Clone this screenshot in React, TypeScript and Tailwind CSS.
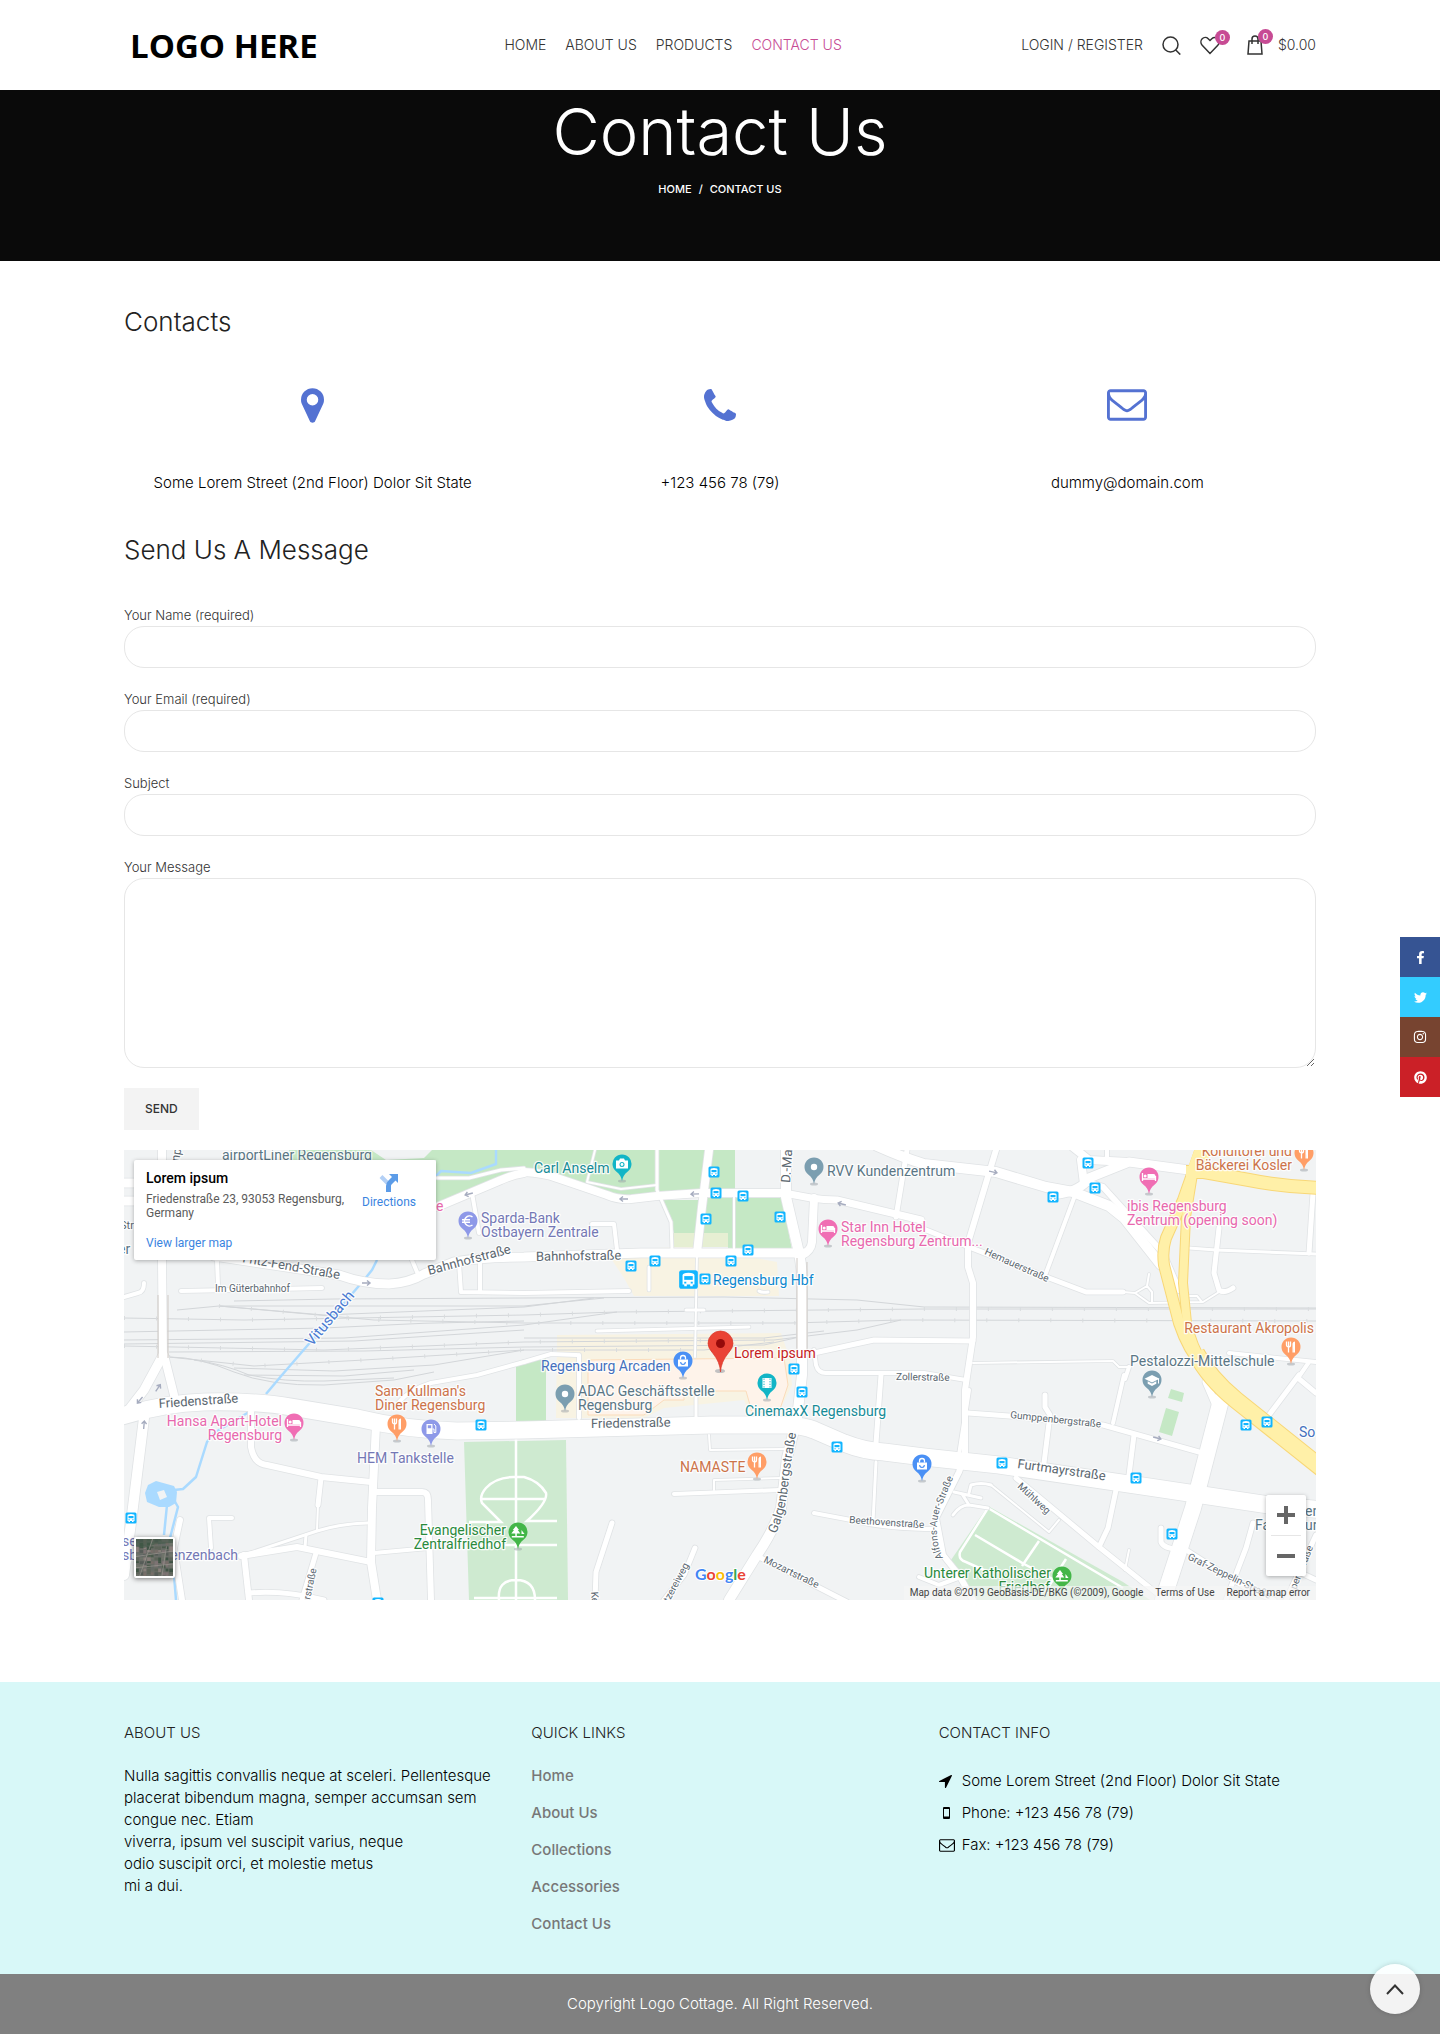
import React from 'react';
import { FaFacebookF, FaTwitter, FaInstagram, FaPinterest } from 'react-icons/fa';

const PHONE =
  'M1408 1240q0 27-10 70.5t-21 68.5q-21 50-122 106-94 51-186 51-27 0-53-3.5t-57.5-12.5-47-14.5-55.5-20.5-49-18q-98-35-175-83-127-79-264-216t-216-264q-48-77-83-175-3-9-18-49t-20.5-55.5-14.5-47-12.5-57.5-3.5-53q0-92 51-186 56-101 106-122 25-11 68.5-21t70.5-10q14 0 21 3 18 6 53 76 11 19 30 54t35 63.5 31 53.5q3 4 17.5 25t21.5 35.5 7 28.5q0 20-28.5 50t-62 55-62 53-28.5 46q0 9 5 22.5t8.5 20.5 14 24 11.5 19q76 137 174 235t235 174q2 1 19 11.5t24 14 20.5 8.5 22.5 5q18 0 46-28.5t53-62 55-62 50-28.5q14 0 28.5 7t35.5 21.5 25 17.5q25 15 53.5 31t63.5 35 54 30q70 35 76 53 3 7 3 21z';
const MARKER =
  'M768 896q0-106-75-181t-181-75-181 75-75 181 75 181 181 75 181-75 75-181zm256 0q0 109-33 179l-364 774q-16 33-47.5 52t-67.5 19-67.5-19-46.5-52l-365-774q-33-70-33-179 0-212 150-362t362-150 362 150 150 362z';
const ENVELOPE =
  'M1664 1504v-768q-32 36-69 66-268 206-426 338-51 43-83 67t-86.5 48.5-102.5 24.5h-2q-48 0-102.5-24.5t-86.5-48.5-83-67q-158-132-426-338-37-30-69-66v768q0 13 9.5 22.5t22.5 9.5h1472q13 0 22.5-9.5t9.5-22.5zm0-1051v-24.5l-.5-13-3-12.5-5.5-9-9-7.5-14-2.5h-1472q-13 0-22.5 9.5t-9.5 22.5q0 168 147 284 193 152 401 317 6 5 35 29.5t46 37.5 44.5 31.5 50.5 27.5 43 9h2q20 0 43-9t50.5-27.5 44.5-31.5 46-37.5 35-29.5q208-165 401-317 54-43 100.5-115.5t46.5-131.5zm128-37v1088q0 66-47 113t-113 47h-1472q-66 0-113-47t-47-113v-1088q0-66 47-113t113-47h1472q66 0 113 47t47 113z';
const ARROW =
  'M1401 217l-640 1280q-17 35-57 35-5 0-15-2-22-5-35.5-22.5t-13.5-39.5v-576h-576q-22 0-39.5-13.5t-22.5-35.5 4-42 29-30l1280-640q13-7 29-7 27 0 45 19 15 14 18.5 34.5t-6.5 39.5z';

/* ---------- map data ---------- */

const roads: [number, string][] = [
  [9, 'M0 33H120M0 51H120'],
  [8, 'M313 57L377 30Q388 25 400 23'],
  [3, 'M313 28H345L377 20L400 18'],
  [8, 'M400 22Q420 23 433 28L483 45Q495 50 507 49L533 46L577 43H660'],
  [9, 'M90 106L215 125Q240 134 265 134Q285 133 300 124L330 112Q360 107 400 107L517 103H680'],
  [8, 'M38 0V110L39 210'],
  [9, 'M39 205L20 240L0 266'],
  [8, 'M40 205L50 245'],
  [10, 'M20 268L8 365L0 425'],
  [8, 'M252 275L248 358L247 412L253 450'],
  [6, 'M127 262V297Q130 314 143 315L197 327L247 332'],
  [6, 'M253 342H298Q304 342 304 350L307 450'],
  [5, 'M197 328L194 355'],
  [2, 'M194 355L193 380'],
  [3, 'M120 405L193 381Q215 374 243 373'],
  [6, 'M117 406L173 397L247 412'],
  [6, 'M120 405L125 450'],
  [5, 'M125 443Q160 440 200 450'],
  [5, 'M192 403L178 450'],
  [3, 'M182 385L181 397'],
  [4, 'M250 403L305 398'],
  [4, 'M108 368H85L87 398'],
  [6, 'M56 370L50 398L58 450'],
  [8, 'M585 0L578 57L573 103'],
  [2, 'M573 103L571 207'],
  [3, 'M533 0V40L547 72L548 100'],
  [2, 'M471 0L463 32L497 39L533 35M610 43V100'],
  [4, 'M468 74H490L493 100'],
  [10, 'M662 0V47L675 103Q678 118 678 133V225L673 268L663 308L657 358Q650 380 633 405L605 450'],
  [7, 'M660 43L687 48Q700 50 713 50L797 70'],
  [8, 'M690 48L688 92Q687 101 678 105'],
  [5, 'M783 0L772 67'],
  [10, 'M753 -4Q780 8 800 14L872 22L922 37L949 42L985 56L1000 68L1037 115'],
  [9, 'M935 44Q958 40 965 28L1005 12L1065 20'],
  [8, 'M945 -6L965 10L1005 12M957 10L960 34'],
  [6, 'M962 32L979 37L1039 103L1055 140'],
  [6, 'M872 0L865 23L844 93V117L849 133V187L841 240V305'],
  [4, 'M845 240L835 305'],
  [4, 'M950 48L922 123'],
  [4, 'M983 0V10'],
  [5, 'M797 78L845 97L925 128L962 142H999'],
  [2, 'M999 142L1011 143L1025 153L1079 152L1095 142M1011 143L1023 136L1025 124M1023 136L1028 142V153M1060 146H1073L1078 152'],
  [5, 'M1095 78L1090 123L1095 140Q1100 144 1109 138'],
  [3, 'M1065 98L1092 100L1192 104'],
  [5, 'M1189 43L1185 103'],
  [5, 'M690 203L750 190L849 191'],
  [4, 'M690 200L692 215Q694 223 702 223H800L842 230'],
  [2, 'M849 213L989 211L995 217H1005'],
  [4, 'M1000 225L989 273M1005 217L1001 229'],
  [5, 'M844 263L885 266L979 275L1075 302'],
  [5, 'M921 245V257L926 265L920 313'],
  [5, 'M1010 285L1005 325M992 340L984 378L975 397'],
  [6, 'M841 305L835 322L812 368L819 405L835 425L849 450'],
  [5, 'M892 328L975 397L1035 445'],
  [3, 'M829 365Q836 355 845 355L864 358M830 342L857 348M845 355L838 344M845 343L847 335Q857 332 867 335'],
  [2, 'M867 335L925 382L935 370M1005 400L1001 420'],
  [5, 'M1037 378V392Q1040 399 1055 399M1059 398L1125 440L1150 450'],
  [5, 'M1129 373L1122 398L1102 450M1192 385L1162 450M1160 415L1192 430'],
  [5, 'M1175 225L1145 265M1174 228L1192 243'],
  [4, 'M1105 203L1192 212M1185 212L1174 228'],
  [16, 'M1097 250L1082 308L1069 358L1039 450'],
  [7, 'M1082 232L1094 260'],
  [17, 'M-5 267Q40 253 80 252Q133 251 167 257L233 268Q283 280 333 281L400 280L587 275H663Q680 276 690 280L720 293Q740 301 760 302L800 307L875 315L1025 337L1145 355L1200 360'],
  [5, 'M488 373L472 422L471 450'],
  [5, 'M571 398L560 425L540 450'],
  [4, 'M550 344L655 340'],
  [2, 'M585 285L586 300L660 299M590 340V330L657 328'],
  [4, 'M690 363L727 370Q760 379 812 379'],
  [5, 'M757 225L752 293'],
  [3, 'M752 312L749 372'],
  [5, 'M635 407L723 452'],
  [4, 'M455 205V268M400 212L427 204L453 205'],
  [3, 'M572 245V268'],
  [4, 'M275 252Q285 240 307 233L353 225L400 212'],
  [4, 'M337 142L400 143L505 141M335 113L337 142M356 113V142'],
  [4, 'M57 141L198 138M93 110L94 135M288 110L293 122M348 43L355 83M20 133Q20 142 14 143L0 147'],
  [3, 'M525 117V140M562 160H580M473 181L625 177M635 141Q638 143 644 142'],
  [4, 'M795 427L815 435L842 425'],
];

const rails = [
  'M0 168L120 170L400 165L493 162L800 159H1192',
  'M0 182L200 178Q300 172 400 171',
  'M53 160L95 156L250 170L400 173L667 173L777 170L1192 171',
  'M110 151L210 149L400 148L600 147L733 150L800 157L1192 158',
  'M95 156H400L480 148',
  'M95 156L200 165L400 157L470 148',
  'M0 190L220 188L400 175L493 162',
  'M0 194L230 191L400 180',
  'M0 196L200 200L400 192L650 190L733 180L777 170',
  'M45 202L240 201L400 197L640 195L680 186',
  'M45 207L130 216L240 210L400 200L580 200L650 192',
  'M45 207Q75 207 110 222Q145 236 200 235L270 230L310 222',
  'M70 210Q100 214 125 225Q160 232 200 231L270 228',
  'M110 218L210 221L310 215L400 200',
  'M120 225L220 226L290 220',
  'M400 188H640L700 181',
];

const ink = {
  street: '#5b6770',
  gray: '#5a7685',
  purple: '#7478b5',
  teal: '#168b97',
  pink: '#e868ad',
  orange: '#cc734a',
  green: '#2a8a3c',
  blue: '#4570bd',
};

type Label = [string, number, number, string, number?, number?, ('end' | 'start')?];
const labels: Label[] = [
  ['airportLiner Regensburg', 98, 10, ink.gray],
  ['Sparda-Bank', 357, 73, ink.purple],
  ['Ostbayern Zentrale', 357, 87, ink.purple],
  ['e', 312, 61, ink.pink],
  ['er', -6, 104, ink.gray],
  ['Str', -4, 79, ink.street, 11],
  ['np', 55, 12, ink.street, 12, -80],
  ['Bahnhofstraße', 305, 125, ink.street, 13, -15],
  ['Bahnhofstraße', 412, 111, ink.street, 13, -1],
  ['Fritz-Fend-Straße', 118, 112, ink.street, 13, 10],
  ['Im Güterbahnhof', 91, 142, ink.street, 10],
  ['Vitusbach', 188, 197, '#4b7bd1', 15, -50],
  ['Carl Anselm', 410, 23, ink.teal],
  ['RVV Kundenzentrum', 703, 26, ink.gray],
  ['D.-Ma', 666, 33, ink.street, 13, -86],
  ['Star Inn Hotel', 717, 82, ink.pink],
  ['Regensburg Zentrum...', 717, 96, ink.pink],
  ['Regensburg Hbf', 589, 135, '#0d88cf'],
  ['Lorem ipsum', 610, 208, '#c5221f'],
  ['Regensburg Arcaden', 417, 221, ink.blue],
  ['Konditorei und', 1168, 6, ink.orange, 14, 0, 'end'],
  ['Bäckerei Kosler', 1168, 20, ink.orange, 14, 0, 'end'],
  ['ibis Regensburg', 1003, 61, ink.pink],
  ['Zentrum (opening soon)', 1003, 75, ink.pink],
  ['Hemauerstraße', 860, 104, ink.street, 10, 24],
  ['Restaurant Akropolis', 1190, 183, ink.orange, 14, 0, 'end'],
  ['Pestalozzi-Mittelschule', 1006, 216, ink.gray],
  ['Friedenstraße', 35, 258, ink.street, 13, -4],
  ['Hansa Apart-Hotel', 158, 276, ink.pink, 14, 0, 'end'],
  ['Regensburg', 158, 290, ink.pink, 14, 0, 'end'],
  ["Sam Kullman's", 251, 246, ink.orange],
  ['Diner Regensburg', 251, 260, ink.orange],
  ['HEM Tankstelle', 233, 313, ink.purple],
  ['Evangelischer', 382, 385, ink.green, 14, 0, 'end'],
  ['Zentralfriedhof', 382, 399, ink.green, 14, 0, 'end'],
  ['se', -2, 396, ink.purple],
  ['sb', -2, 410, ink.purple],
  ['enzenbach', 114, 410, ink.purple, 14, 0, 'end'],
  ['rstraße', 186, 450, ink.street, 10, -78],
  ['ADAC Geschäftsstelle', 454, 246, ink.gray],
  ['Regensburg', 454, 260, ink.gray],
  ['Friedenstraße', 467, 278, ink.street, 13, -1],
  ['CinemaxX Regensburg', 621, 266, ink.teal],
  ['NAMASTE', 556, 322, ink.orange],
  ['Zollerstraße', 772, 230, ink.street, 10, 1],
  ['Beethovenstraße', 725, 373, ink.street, 10, 4],
  ['Mozartstraße', 639, 412, ink.street, 10, 26],
  ['tzereiweg', 545, 453, ink.street, 10, -62],
  ['Ke', 467, 442, ink.street, 10, 85],
  ['Gumppenbergstraße', 886, 268, ink.street, 10, 6],
  ['Furtmayrstraße', 893, 318, ink.street, 13, 8],
  ['Mühlweg', 893, 337, ink.street, 10, 43],
  ['Unterer Katholischer', 800, 428, ink.green],
  ['Friedhof', 926, 442, ink.green, 14, 0, 'end'],
  ['So', 1175, 287, ink.blue],
  ['en', 1181, 366, ink.gray],
  ['Fa', 1131, 380, ink.gray],
  ['ur', 1181, 380, ink.gray],
  ['Graf-Zeppelin-Straße', 1063, 409, ink.street, 10, 26],
  ['per-Straße', 1172, 440, ink.street, 10, -68],
];

const glyphs: Record<string, React.ReactNode> = {
  dot: <circle r="3.2" fill="#fff" />,
  camera: (
    <>
      <path d="M-6 -3.500h3l1-2h4l1 2h3v8h-12z" fill="#fff" />
      <circle cy=".5" r="2.500" fill="#12b5c6" />
      <circle cy=".5" r="1.400" fill="#fff" />
    </>
  ),
  bed: (
    <>
      <path d="M-6.500 -4v8M-6.500 2h13M6.500 4v-5" stroke="#fff" strokeWidth="1.300" fill="none" />
      <path d="M-1.500 -3h6a2 2 0 0 1 2 2v2h-8z" fill="#fff" />
      <circle cx="-3.800" cy="-1" r="1.500" fill="#fff" />
    </>
  ),
  food: (
    <>
      <path d="M-4.500 -5.500v3.500a2 2 0 0 0 4 0v-3.500M-2.500 -5.500v11" stroke="#fff" strokeWidth="1.300" fill="none" />
      <path d="M1.500 5.500v-9q.5-2 2.500-2v11h-1.200v-4h-.1v4z" fill="#fff" />
    </>
  ),
  bag: (
    <>
      <path d="M-5 -1.500h10v7h-10z" fill="#fff" />
      <path d="M-2.500 -1.500v-1.500a2.500 2.500 0 0 1 5 0v1.500" stroke="#fff" strokeWidth="1.300" fill="none" />
      <path d="M-2.300 1a2.300 2.300 0 0 0 4.600 0" stroke="#4a90f5" strokeWidth="1.200" fill="none" />
    </>
  ),
  fuel: (
    <>
      <path d="M-4.500 5v-10h6v10zM-3.200 -3.700v3h3.400v-3z" fill="#fff" fillRule="evenodd" />
      <path d="M1.500 0h1.500v3.500h1.800v-6.500l-1.800-2" stroke="#fff" strokeWidth="1" fill="none" />
    </>
  ),
  film: (
    <>
      <path d="M-4.500 -5h9v10h-9z" fill="#fff" />
      <path d="M-3 -4.500v9M3 -4.500v9" stroke="#12b5c6" strokeDasharray="1.300 1.300" fill="none" />
    </>
  ),
  cap: (
    <>
      <path d="M0 -5l7.500 3.700-7.500 3.700-7.500-3.700z" fill="#fff" />
      <path d="M-4.300 1.300l4.300 2.200 4.300-2.200v2.500l-4.300 2.200-4.300-2.200zM6 -1v4.500h1v-5z" fill="#fff" />
    </>
  ),
  tree: <path d="M-2 -6l3 4h-1.200l2.500 3.500h-3.500v2.500h7v1.500h-12v-1.500h3.500v-2.500h-4l2.700-3.500h-1.200zM3.500 -2l3 4h-3z" fill="#fff" />,
  euro: <path d="M4.500 -4a5 5 0 1 0 0 8M-6 -1.300h8M-6 1.300h8" stroke="#fff" strokeWidth="1.500" fill="none" />,
};

const pins: [number, number, string, string][] = [
  [498, 14, '#12b5c6', 'camera'],
  [690, 17, '#7b9eb0', 'dot'],
  [704, 79, '#f06eb4', 'bed'],
  [344, 71, '#8e99e8', 'euro'],
  [559, 211, '#4a90f5', 'bag'],
  [1025, 27, '#f06eb4', 'bed'],
  [1180, 3, '#ff9e67', 'food'],
  [1167, 197, '#ff9e67', 'food'],
  [1028, 230, '#7b9eb0', 'cap'],
  [170, 273, '#f06eb4', 'bed'],
  [273, 274, '#ff9e67', 'food'],
  [307, 279, '#8e99e8', 'fuel'],
  [394, 382, '#43b648', 'tree'],
  [441, 244, '#7b9eb0', 'dot'],
  [643, 233, '#12b5c6', 'film'],
  [633, 312, '#ff9e67', 'food'],
  [798, 314, '#4a90f5', 'bag'],
  [938, 426, '#43b648', 'tree'],
];

const stops: [number, number][] = [
  [590, 22], [592, 43], [619, 46], [582, 69], [656, 67], [624, 100], [607, 111], [531, 111],
  [507, 116], [581, 129], [670, 219], [964, 13], [971, 38], [929, 47], [357, 275], [7, 368],
  [254, 453], [678, 242], [713, 297], [878, 313], [1012, 328], [1048, 384], [1122, 275], [1143, 272],
];

const arrows: [number, number, number][] = [
  [345, 44, 165], [242, 133, 0], [500, 49, 180], [571, 44, 178], [718, 54, 195], [869, 22, 12],
  [34, 238, -55], [16, 250, 130], [20, 275, -85], [1033, 288, 15],
];

function Bus() {
  return (
    <>
      <rect x="-5.500" y="-5.500" width="11" height="11" rx="1.500" fill="#12b5ff" />
      <path d="M-3.500 3v-5.500q0-1.500 3.500-1.500t3.500 1.500v5.500h-1v1h-1.500v-1h-2v1h-1.500v-1z" fill="#fff" />
      <path d="M-2.500 -2h5v2.200h-5z" fill="#12b5ff" />
      <path d="M-2.500 1.300h1.200v1h-1.200zM1.300 1.300h1.200v1h-1.200z" fill="#12b5ff" />
    </>
  );
}

function MapDrawing() {
  return (
    <svg
      viewBox="0 0 1192 450"
      preserveAspectRatio="xMidYMid slice"
      className="block h-full w-full"
      role="img"
      aria-label="Street map of Regensburg"
      fontFamily="Roboto, sans-serif"
    >
      <rect width="1192" height="450" fill="#f1f3f4" />
      <g fill="#c5e8c5">
        <path d="M165 0H247L262 10L300 8L308 0H582L577 42L507 48L483 44L433 27L400 20L377 27L312 57V10H165z" />
        <path d="M587 0H611V42H582z" />
        <path d="M537 50H577L573 83H550L547 72z" />
        <path d="M583 48H658L668 100H604V85H578z" />
        <path d="M392 215L400 212L422 204V272H392z" />
        <path d="M1047 239L1060 243L1058 252L1044 248zM1042 258L1055 262L1048 286L1035 282z" />
      </g>
      <g fill="#ceead0">
        <path d="M340 292L442 290L444 450H345z" />
        <path d="M864 356L999 432L1026 450H845L827 410z" />
      </g>
      <g stroke="#fff" strokeWidth="2.500" fill="none">
        <path d="M392 288V450M345 395H433M357 349H422M345 372H377L358 353Q355 346 362 338Q372 327 390 327H400Q415 331 422 343Q424 352 403 371H433M350 448H433M375 450Q373 430 392 430Q411 430 411 450" />
        <path d="M864 358L836 402Q834 410 842 412L862 421M864 358L999 438M851 385L900 414L942 436M915 391L898 416M942 409L925 436" />
      </g>
      <path d="M549 83H604V97H549z" fill="#e6efd3" />
      <path d="M488 110L530 98L573 97L653 112L655 146H510L500 128z" fill="#f8f3e3" />
      <path d="M433 185L657 183L666 210L668 235L655 262H625L620 250L540 258L520 268H432z" fill="#f8f3e3" />
      <path d="M464 210L660 208L664 235L655 262H628L622 241H560V250H540L520 265H464z" fill="#fef3ea" stroke="#fbdcbb" />

      <g fill="none" stroke="#d3d6d9" strokeWidth="1">
        {rails.map((d) => <path key={d} d={d} />)}
      </g>
      <g fill="none" stroke="#d9dcde" strokeWidth="4">
        <path d="M0 168L120 170L400 165L493 162L800 159H1192" strokeDasharray="1 31" />
        <path d="M95 156L250 170L400 173L667 173L777 170L1192 171" strokeDasharray="1 31" />
        <path d="M0 196L200 200L400 192L650 190" strokeDasharray="1 31" />
        <path d="M45 207L130 216L240 210L400 200L580 200" strokeDasharray="1 31" />
      </g>

      <g fill="none" stroke="#aadaff" strokeWidth="2.500" strokeLinejoin="round">
        <path d="M253 110L248 120L240 130L158 225L142 244M125 262L90 283L83 292L72 327L59 339L50 340M43 355L40 385M50 350L54 357L46 388L50 425L52 450" />
        <path d="M372 0V14L347 23L317 21L312 26" />
      </g>
      <path fillRule="evenodd" fill="#aadaff" d="M21 343L24 335L32 331L50 336L53 342L52 353L45 357L35 357L23 352zM33 342L40 340L43 347L36 350z" />

      <g fill="none" stroke="#e0e3e5" strokeLinecap="round" strokeLinejoin="round">
        {roads.map(([w, d]) => <path key={d} d={d} strokeWidth={w + 1.6} />)}
      </g>
      <g fill="none" stroke="#fff" strokeLinecap="round" strokeLinejoin="round">
        {roads.map(([w, d]) => <path key={d} d={d} strokeWidth={w} />)}
      </g>
      <path d="M34 145L34 208M44 145V208M673 108V205M683 112V205" stroke="#cfc9c4" fill="none" />

      <g fill="none" strokeLinejoin="round">
        {['#f8d777', '#fff0a8'].map((c, i) => (
          <g key={c} stroke={c}>
            <path strokeWidth={i ? 12 : 14} d="M1062 22L1080 22L1125 30Q1160 37 1200 38" />
            <path strokeWidth={i ? 10 : 12} d="M1078 -4L1059 50L1042 88Q1038 100 1040 115L1055 173Q1064 200 1080 218" />
            <path strokeWidth={i ? 8 : 10} d="M1070 18L1062 67L1059 133L1063 173Q1068 195 1080 215" />
            <path strokeWidth={i ? 16 : 18} d="M1072 203Q1085 228 1112 250L1200 320" />
          </g>
        ))}
        <path strokeWidth="16" stroke="#fff0a8" d="M1081 -6L1071 22" />
      </g>

      {arrows.map(([x, y, r]) => (
        <path key={`${x}-${y}`} transform={`translate(${x} ${y}) rotate(${r})`} d="M-4 0H4M1 -2.500L4 0L1 2.500" stroke="#a6acbf" strokeWidth="1.400" fill="none" />
      ))}

      {stops.map(([x, y]) => (
        <g key={`${x}-${y}`} transform={`translate(${x} ${y})`}><Bus /></g>
      ))}
      <g transform="translate(564.500 129.500) scale(1.700)"><Bus /></g>

      <g paintOrder="stroke" stroke="#fff" strokeWidth="2.500" strokeLinejoin="round" strokeOpacity=".85">
        {labels.map(([t, x, y, c, s = 14, r = 0, a = 'start']) => (
          <text key={`${t}-${x}-${y}`} fill={c} fontSize={s} textAnchor={a} transform={`translate(${x} ${y}) rotate(${r})`}>
            {t}
          </text>
        ))}
        <path id="galgen" d="M652 384Q664 355 665 325L673 278" fill="none" stroke="none" />
        <text fill={ink.street} fontSize="13"><textPath href="#galgen">Galgenbergstraße</textPath></text>
        <path id="alfons" d="M819 408Q806 378 820 350L838 306L846 280" fill="none" stroke="none" />
        <text fill={ink.street} fontSize="10"><textPath href="#alfons">Alfons-Auer-Straße</textPath></text>
      </g>

      {pins.map(([x, y, c, g]) => (
        <g key={`${x}-${y}`} transform={`translate(${x} ${y})`}>
          <ellipse cy="17" rx="4" ry="1.500" fill="#9aa0a6" opacity=".5" />
          <path d="M0 17Q-1 11 -5.500 7.700A9.500 9.500 0 1 1 5.500 7.700Q1 11 0 17z" fill={c} />
          {glyphs[g]}
        </g>
      ))}
      <ellipse cx="596" cy="221" rx="5" ry="2" fill="#9aa0a6" opacity=".6" />
      <path d="M596.500 222Q596 212 589 203.500Q584 198 584 193.500A12.500 12.500 0 0 1 609 193.500Q609 198 604 203.500Q597 212 596.500 222z" fill="#ea4335" stroke="#d73a2d" strokeWidth=".7" />
      <circle cx="596.500" cy="193.500" r="4.500" fill="#960a0a" />

      <text x="571" y="430" fontFamily="Lato, sans-serif" fontSize="16" fontWeight="700" stroke="#fff" strokeWidth="2" paintOrder="stroke">
        <tspan fill="#4285f4">G</tspan>
        <tspan fill="#ea4335">o</tspan>
        <tspan fill="#fbbc05">o</tspan>
        <tspan fill="#4285f4">g</tspan>
        <tspan fill="#34a853">l</tspan>
        <tspan fill="#ea4335">e</tspan>
      </text>
    </svg>
  );
}

function SatelliteThumb() {
  const cells = Array.from({ length: 100 }, (_, i) => i);
  const tones = ['#5d6459', '#776e69', '#4a5a4b', '#8a7f7b', '#565c58', '#6f746a', '#3f5344', '#7d7373', '#646a66'];
  return (
    <svg viewBox="0 0 40 40" className="h-full w-full" aria-hidden="true">
      <rect width="40" height="40" fill="#6a6d67" />
      {cells.map((i) => (
        <rect key={i} x={(i % 10) * 4} y={Math.floor(i / 10) * 4} width={3 + (i % 2)} height={2 + (i % 3)} fill={tones[(i * i + 3 * i + Math.floor(i / 10)) % 9]} />
      ))}
      <path d="M0 0H40V4L20 6L8 10L0 8z" fill="#35543f" opacity=".5" />
      <path d="M0 19L40 13M4 40L18 0M0 31L40 27M28 40L33 8" stroke="#96938d" strokeWidth=".8" fill="none" />
    </svg>
  );
}

function LocationMap() {
  return (
    <section aria-label="Map" className="relative mt-5 h-[450px] overflow-hidden font-[Roboto,sans-serif] font-normal">
      <MapDrawing />
      <div className="absolute left-[10px] top-[10px] flex h-[100px] w-[302px] justify-between rounded-xs bg-white px-3 py-2 shadow-[0_1px_4px_rgba(0,0,0,0.3)]">
        <div className="flex w-[204px] flex-col text-xs">
          <strong className="text-sm font-medium leading-5 text-black">Lorem ipsum</strong>
          <span className="mt-1 leading-[14px] text-[#5b5b5b]">Friedenstraße 23, 93053 Regensburg, Germany</span>
          <a href="#map" className="mt-4 leading-[14px] text-[#3a84df]">View larger map</a>
        </div>
        <a href="#directions" className="flex w-[70px] flex-col items-center pt-1 text-xs text-[#3a84df]">
          <svg viewBox="0 0 22 22" className="h-[22px] w-[22px]" aria-hidden="true">
            <path d="M3 4.500L9.500 11" stroke="#b3d0f6" strokeWidth="4" />
            <path d="M10.500 20v-6q0-2 1.500-3.500l5-5" stroke="#5c9ce8" strokeWidth="5" fill="none" />
            <path d="M11 2h9v9z" fill="#5c9ce8" />
          </svg>
          <span className="leading-4">Directions</span>
        </a>
      </div>
      <button type="button" aria-label="Show satellite imagery" className="absolute bottom-[22px] left-[10px] h-[41px] w-[41px] rounded-xs border-2 border-white bg-white shadow-[0_1px_5px_rgba(0,0,0,0.5)]">
        <SatelliteThumb />
      </button>
      <div className="absolute bottom-[24px] right-[10px] flex h-[81px] w-10 flex-col items-center rounded-xs bg-white shadow-[0_1px_4px_rgba(0,0,0,0.3)]">
        <button type="button" aria-label="Zoom in" className="grid w-full flex-1 place-items-center">
          <svg viewBox="0 0 18 18" className="h-[18px] w-[18px]" aria-hidden="true"><path d="M9 0v18M0 9h18" stroke="#666" strokeWidth="4" /></svg>
        </button>
        <span className="h-px w-[30px] bg-[#e6e6e6]" />
        <button type="button" aria-label="Zoom out" className="grid w-full flex-1 place-items-center">
          <svg viewBox="0 0 18 18" className="h-[18px] w-[18px]" aria-hidden="true"><path d="M0 9h18" stroke="#666" strokeWidth="4" /></svg>
        </button>
      </div>
      <div className="absolute bottom-0 right-0 flex h-[14px] gap-3 bg-[#f5f5f5]/70 px-[6px] text-[10px] leading-[14px] text-[#444]">
        <span>Map data ©2019 GeoBasis-DE/BKG (©2009), Google</span>
        <a href="#terms">Terms of Use</a>
        <a href="#report">Report a map error</a>
      </div>
    </section>
  );
}

/* ---------- page ---------- */

const wrap = 'mx-auto w-full max-w-[1222px] px-[15px]';

function Badge() {
  return (
    <span className="absolute -right-[10px] -top-[6px] grid h-[15px] w-[15px] place-items-center rounded-full bg-[#c74b94] text-[9px] font-medium leading-none text-white">
      0
    </span>
  );
}

function Header() {
  return (
    <header className="bg-white">
      <div className={`${wrap} flex h-[90px] items-center justify-between text-sm text-[#333]`}>
        <a href="#home" className="w-[201px] whitespace-nowrap pl-[6px] font-['Open_Sans',sans-serif] text-[33px] font-bold leading-none text-black">
          LOGO HERE
        </a>
        <nav className="flex gap-[19px]">
          <a href="#home">HOME</a>
          <a href="#about">ABOUT US</a>
          <a href="#products">PRODUCTS</a>
          <a href="#contact" className="text-[#c74b94]">CONTACT US</a>
        </nav>
        <div className="flex items-center gap-[19px]">
          <a href="#login">LOGIN / REGISTER</a>
          <button type="button" aria-label="Search">
            <svg viewBox="0 0 19 19" className="h-[19px] w-[19px]" fill="none" stroke="#333" strokeWidth="1.500" aria-hidden="true">
              <circle cx="8.500" cy="8.500" r="7.500" />
              <path d="M13.500 13.800L18.300 18.600" />
            </svg>
          </button>
          <a href="#wishlist" aria-label="Wishlist" className="relative">
            <svg viewBox="0 0 20 19" className="h-[19px] w-5" fill="none" stroke="#333" strokeWidth="1.500" aria-hidden="true">
              <path d="M10 17.500L2.200 9.300C.5 7.300.5 4.500 2.200 2.800S6.500 1 8.200 2.700L10 4.500l1.800-1.800c1.700-1.700 4.300-1.600 6 .1s1.700 4.500 0 6.500z" />
            </svg>
            <Badge />
          </a>
          <a href="#cart" className="flex items-center gap-[15px] pl-2">
            <span className="relative">
              <svg viewBox="0 0 16 20" className="h-5 w-4" fill="none" stroke="#333" strokeWidth="1.500" aria-hidden="true">
                <path d="M2 6h12l1 13H1z" />
                <path d="M5 9V4a3 3 0 0 1 6 0v5" />
              </svg>
              <Badge />
            </span>
            <span>$0.00</span>
          </a>
        </div>
      </div>
    </header>
  );
}

function Glyph({ d, box, className }: { d: string; box: string; className: string }) {
  return (
    <svg viewBox={box} className={className} fill="currentColor" aria-hidden="true">
      <path d={d} />
    </svg>
  );
}

function Field({ id, label, type = 'text' }: { id: string; label: string; type?: string }) {
  return (
    <div className="flex flex-col">
      <label htmlFor={id} className="leading-[22px]">{label}</label>
      <input id={id} type={type} className="h-[42px] w-full rounded-[20px] border border-[#e6e6e6] bg-white px-4 outline-none" />
    </div>
  );
}

export default function App() {
  return (
    <div className="bg-white font-[Inter,sans-serif] font-light">
      <Header />
      <section className="flex h-[171px] flex-col items-center bg-[#0a0a0a] text-white">
        <h1 className="mt-[3px] text-[65px] leading-[78px]">Contact Us</h1>
        <p className="mt-[10px] flex gap-[7px] text-[11px] font-medium leading-4">
          <a href="#home">HOME</a>
          <span>/</span>
          <span>CONTACT US</span>
        </p>
      </section>

      <main className={`${wrap} pb-[82px] pt-[41px]`}>
        <h2 className="text-[26px] leading-10 text-[#222]">Contacts</h2>
        <div className="mt-[43px] grid grid-cols-3 gap-[30px] text-[15px] leading-[22px] text-black">
          {[
            { d: MARKER, box: '0 384 1024 1536', cls: 'h-[35px] w-[23px]', text: 'Some Lorem Street (2nd Floor) Dolor Sit State' },
            { d: PHONE, box: '0 128 1408 1408', cls: 'h-8 w-8', text: '+123 456 78 (79)' },
            { d: ENVELOPE, box: '0 256 1792 1408', cls: 'h-8 w-10', text: 'dummy@domain.com' },
          ].map((c) => (
            <div key={c.text} className="flex flex-col items-center">
              <span className="grid h-10 place-items-center text-[#5472d2]">
                <Glyph d={c.d} box={c.box} className={c.cls} />
              </span>
              <p className="mt-[47px]">{c.text}</p>
            </div>
          ))}
        </div>

        <h2 className="mt-9 text-[26px] leading-10 text-[#222]">Send Us A Message</h2>
        <form className="mt-[34px] flex flex-col gap-5 text-[13px] text-[#333]" onSubmit={(e) => e.preventDefault()}>
          <Field id="name" label="Your Name (required)" />
          <Field id="email" label="Your Email (required)" type="email" />
          <Field id="subject" label="Subject" />
          <div className="flex flex-col">
            <label htmlFor="message" className="leading-[22px]">Your Message</label>
            <textarea id="message" className="h-[190px] w-full resize rounded-[20px] border border-[#e6e6e6] bg-white p-4 outline-none" />
          </div>
          <button type="submit" className="h-[42px] self-start bg-[#f3f3f3] px-[21px] text-xs font-medium text-[#333]">SEND</button>
        </form>
        <LocationMap />
      </main>

      <footer>
        <div className="bg-[#d8f8f8]">
          <div className={`${wrap} grid grid-cols-3 gap-[30px] pb-[39px] pt-10 text-[15px] leading-[22px] text-black`}>
            <div>
              <h3 className="text-[#222]">ABOUT US</h3>
              <p className="mt-[21px]">
                Nulla sagittis convallis neque at sceleri. Pellentesque placerat bibendum magna, semper accumsan sem congue nec. Etiam
                <br />viverra, ipsum vel suscipit varius, neque
                <br />odio suscipit orci, et molestie metus
                <br />mi a dui.
              </p>
            </div>
            <div>
              <h3 className="text-[#222]">QUICK LINKS</h3>
              <ul className="mt-[21px] flex flex-col gap-[15px] font-medium text-[#777]">
                {['Home', 'About Us', 'Collections', 'Accessories', 'Contact Us'].map((t) => (
                  <li key={t}><a href={`#${t}`}>{t}</a></li>
                ))}
              </ul>
            </div>
            <div>
              <h3 className="text-[#222]">CONTACT INFO</h3>
              <ul className="mt-[26px] flex flex-col gap-[10px]">
                <li className="flex items-center"><span className="w-[23px]"><Glyph d={ARROW} box="0 128 1408 1408" className="h-[13px] w-[13px]" /></span>Some Lorem Street (2nd Floor) Dolor Sit State</li>
                <li className="flex items-center">
                  <span className="w-[23px] pl-1">
                    <svg viewBox="0 0 7 12" className="h-3 w-[7px]" aria-hidden="true">
                      <path fillRule="evenodd" d="M1 0h5q1 0 1 1v10q0 1-1 1h-5q-1 0-1-1v-10q0-1 1-1zM1 2v7.500h5v-7.500z" />
                    </svg>
                  </span>
                  Phone: +123 456 78 (79)
                </li>
                <li className="flex items-center"><span className="w-[23px]"><Glyph d={ENVELOPE} box="0 256 1792 1408" className="h-[13px] w-4" /></span>Fax: +123 456 78 (79)</li>
              </ul>
            </div>
          </div>
        </div>
        <div className="grid h-[60px] place-items-center bg-[#808080] text-[15px] text-white">
          <p>Copyright Logo Cottage. All Right Reserved.</p>
        </div>
      </footer>

      <div className="fixed right-0 top-1/2 flex -translate-y-1/2 flex-col text-xs text-white">
        <a href="#facebook" aria-label="Facebook" className="grid h-10 w-10 place-items-center bg-[#365493]"><FaFacebookF size={13} /></a>
        <a href="#twitter" aria-label="Twitter" className="grid h-10 w-10 place-items-center bg-[#33ccff]"><FaTwitter size={13} /></a>
        <a href="#instagram" aria-label="Instagram" className="grid h-10 w-10 place-items-center bg-[#774430]"><FaInstagram size={14} /></a>
        <a href="#pinterest" aria-label="Pinterest" className="grid h-10 w-10 place-items-center bg-[#cb2027]"><FaPinterest size={13} /></a>
      </div>
      <button type="button" aria-label="Scroll to top" className="fixed bottom-5 right-5 grid h-[50px] w-[50px] place-items-center rounded-full bg-white/90 shadow-[0_0_5px_rgba(0,0,0,0.17)]">
        <svg viewBox="0 0 18 11" className="h-[11px] w-[18px]" fill="none" stroke="#333" strokeWidth="2" aria-hidden="true"><path d="M1 10L9 1.500L17 10" /></svg>
      </button>
    </div>
  );
}
